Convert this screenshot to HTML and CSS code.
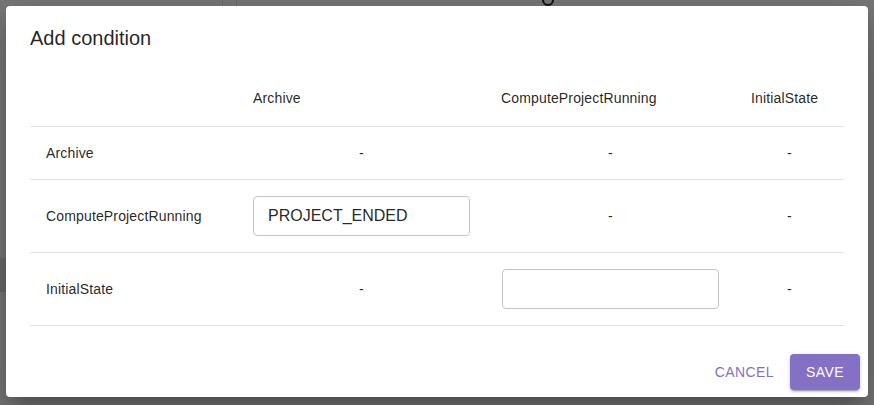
FILE: index.html
```html
<!DOCTYPE html>
<html lang="en">
<head>
<meta charset="UTF-8">
<meta name="viewport" content="width=device-width, initial-scale=1.0">
<title>Add condition</title>
<link rel="stylesheet" href="styles.css">
</head>
<body>

<div class="backdrop">
<div class="bg-line bg-line-a"></div>
<div class="bg-line bg-line-b"></div>
<div class="bg-knob"></div>
<div class="bg-tab"></div>

<div class="dialog">
<h2 class="dialog-title">Add condition</h2>
<div class="dialog-content">
<table class="matrix">
<thead>
<tr>
<th class="col-label"></th>
<th class="col-a">Archive</th>
<th class="col-b">ComputeProjectRunning</th>
<th class="col-c">InitialState</th>
</tr>
</thead>
<tbody>
<tr class="row-short">
<td class="label">Archive</td>
<td class="empty">-</td>
<td class="empty">-</td>
<td class="empty">-</td>
</tr>
<tr>
<td class="label">ComputeProjectRunning</td>
<td><input class="field" type="text" value="PROJECT_ENDED"></td>
<td class="empty">-</td>
<td class="empty">-</td>
</tr>
<tr>
<td class="label">InitialState</td>
<td class="empty">-</td>
<td><input class="field" type="text" value=""></td>
<td class="empty">-</td>
</tr>
</tbody>
</table>
</div>
<div class="dialog-actions">
<button class="btn btn-text">Cancel</button>
<button class="btn btn-primary">Save</button>
</div>
</div>
</div>

</body>
</html>
```

FILE: styles.css
```css
* {
box-sizing: border-box;
}
body {
margin: 0;
font-family: "Liberation Sans", Arial, sans-serif;
background: #787878;
}
.backdrop {
position: relative;
width: 874px;
height: 405px;
padding: 6px;
background: #787878;
overflow: hidden;
}
.bg-line {
position: absolute;
top: 0;
width: 1px;
height: 6px;
background: #6a6a6a;
}
.bg-line-a {
left: 222px;
}
.bg-line-b {
left: 236px;
}
.bg-knob {
position: absolute;
top: -6px;
left: 542px;
width: 12px;
height: 12px;
border: 2px solid #111;
border-radius: 50%;
}
.bg-tab {
position: absolute;
left: 0;
top: 258px;
width: 6px;
height: 34px;
background: #6c6c6c;
}
.dialog {
position: relative;
width: 862px;
height: 391px;
background: #fff;
border-radius: 4px;
box-shadow: 0 11px 15px -7px rgba(0,0,0,0.2), 0 24px 38px 3px rgba(0,0,0,0.14), 0 9px 46px 8px rgba(0,0,0,0.12);
display: flex;
flex-direction: column;
}
.dialog-title {
margin: 0;
padding: 16px 24px;
font-size: 20px;
font-weight: 400;
line-height: 32px;
color: rgba(0,0,0,0.87);
}
.dialog-content {
padding: 0 24px 20px;
}
.matrix {
width: 814px;
border-collapse: collapse;
table-layout: fixed;
font-size: 14px;
letter-spacing: 0.01071em;
color: rgba(0,0,0,0.87);
}
.matrix th,
.matrix td {
padding: 16px;
border-bottom: 1px solid #e0e0e0;
line-height: 20px;
vertical-align: middle;
}
.matrix th {
font-weight: 400;
text-align: left;
padding-top: 18px;
padding-bottom: 18px;
}
.col-label {
width: 207px;
}
.col-a {
width: 249px;
}
.col-b {
width: 249px;
padding-left: 15px !important;
}
.col-c {
width: 109px;
}
.matrix td.empty {
text-align: center;
}
.field {
display: block;
width: 217px;
height: 40px;
padding: 8px 14px;
border: 1px solid #c4c4c4;
border-radius: 4px;
font-family: "Liberation Sans", Arial, sans-serif;
font-size: 16px;
color: rgba(0,0,0,0.87);
background: #fff;
outline: none;
}
.dialog-actions {
display: flex;
justify-content: flex-end;
align-items: center;
gap: 8px;
padding: 8px;
}
.btn {
font-family: "Liberation Sans", Arial, sans-serif;
font-size: 14px;
font-weight: 500;
letter-spacing: 0.02857em;
text-transform: uppercase;
line-height: 24px;
border: 0;
border-radius: 4px;
cursor: pointer;
}
.btn-text {
padding: 6px 8px;
background: none;
color: #8470c4;
}
.btn-primary {
padding: 6px 16px;
min-width: 70px;
background: #8470c4;
color: #fff;
box-shadow: 0 3px 1px -2px rgba(0,0,0,0.2), 0 2px 2px 0 rgba(0,0,0,0.14), 0 1px 5px 0 rgba(0,0,0,0.12);
}
```
